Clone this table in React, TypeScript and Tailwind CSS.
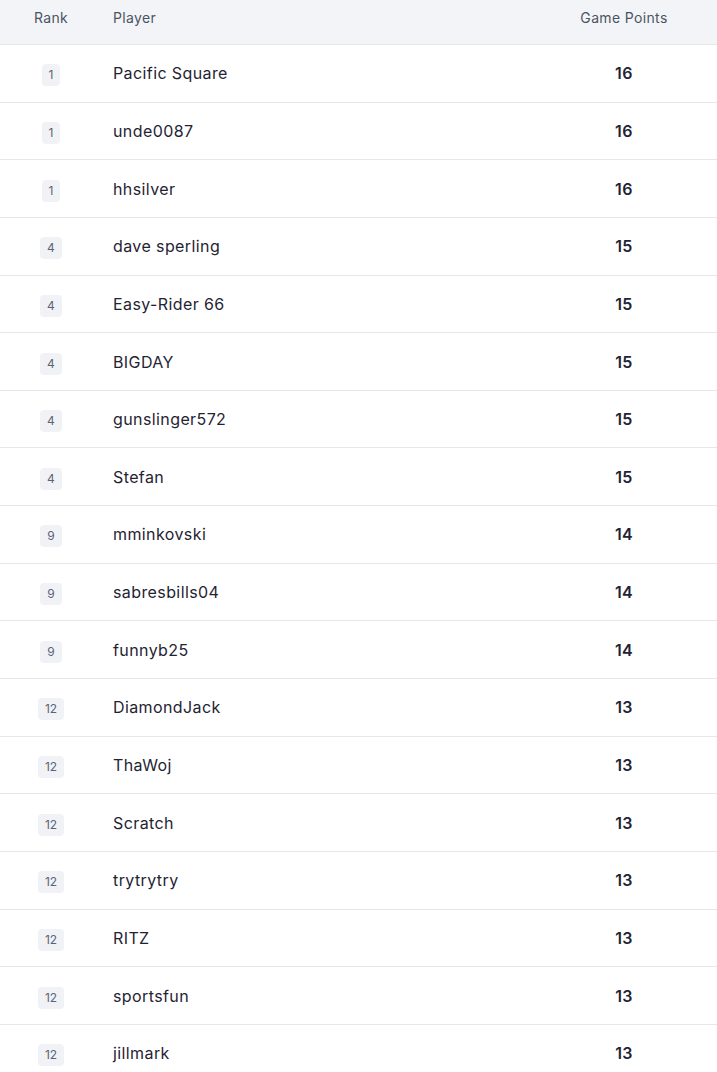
import React from 'react';

interface Entry {
  rank: number;
  player: string;
  points: number;
}

const entries: Entry[] = [
  { rank: 1, player: 'Pacific Square', points: 16 },
  { rank: 1, player: 'unde0087', points: 16 },
  { rank: 1, player: 'hhsilver', points: 16 },
  { rank: 4, player: 'dave sperling', points: 15 },
  { rank: 4, player: 'Easy-Rider 66', points: 15 },
  { rank: 4, player: 'BIGDAY', points: 15 },
  { rank: 4, player: 'gunslinger572', points: 15 },
  { rank: 4, player: 'Stefan', points: 15 },
  { rank: 9, player: 'mminkovski', points: 14 },
  { rank: 9, player: 'sabresbills04', points: 14 },
  { rank: 9, player: 'funnyb25', points: 14 },
  { rank: 12, player: 'DiamondJack', points: 13 },
  { rank: 12, player: 'ThaWoj', points: 13 },
  { rank: 12, player: 'Scratch', points: 13 },
  { rank: 12, player: 'trytrytry', points: 13 },
  { rank: 12, player: 'RITZ', points: 13 },
  { rank: 12, player: 'sportsfun', points: 13 },
  { rank: 12, player: 'jillmark', points: 13 },
];

const App: React.FC = () => {
  return (
    <div className="w-[717px] h-[1072px] overflow-hidden bg-white font-['Inter',sans-serif]">
      {/* header */}
      <div className="grid grid-cols-[102px_1fr_186px] h-[45px] bg-[#f3f4f7] border-b border-[#e6e7eb] text-[14px] tracking-[0.025em] text-[#4b5563] pt-[7px]">
        <div className="text-center">Rank</div>
        <div className="pl-[11px]">Player</div>
        <div className="text-center">Game Points</div>
      </div>

      {entries.map((entry, index) => (
        <div
          key={index}
          className="grid grid-cols-[102px_1fr_186px] items-center h-[57.65px] border-b border-[#e6e7eb] tracking-[0.025em]"
        >
          <div className="flex justify-center pt-[4px]">
            <span className="h-[22px] px-[7px] flex items-center rounded bg-[#f1f2f6] text-[12px] tracking-normal text-[#5b6474]">
              {entry.rank}
            </span>
          </div>
          <div className="pl-[11px] text-[16px] text-[#1f2433]">{entry.player}</div>
          <div className="text-center text-[16px] font-semibold text-[#1f2433]">{entry.points}</div>
        </div>
      ))}
    </div>
  );
};

export default App;
